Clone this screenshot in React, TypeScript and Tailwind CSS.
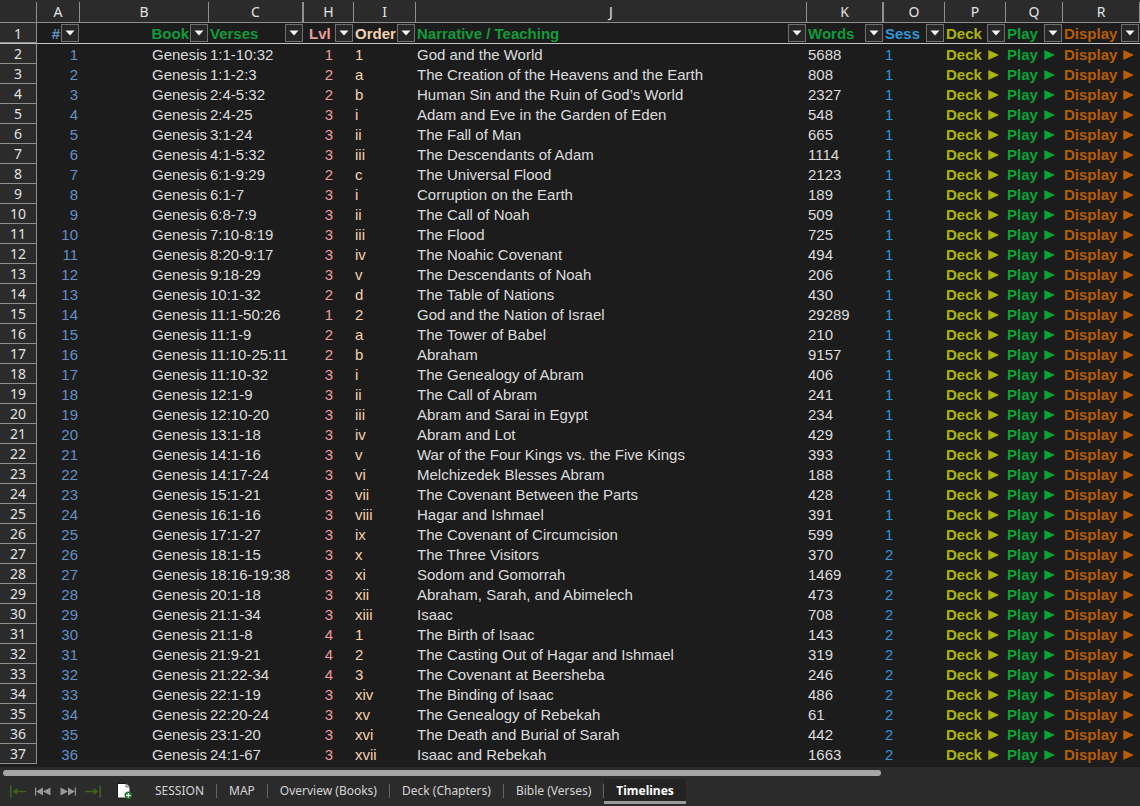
import React from "react";

type Row = [verses: string, level: number, order: string, title: string, words: number];

const rows: Row[] = [
  ["1:1-10:32", 1, "1", "God and the World", 5688],
  ["1:1-2:3", 2, "a", "The Creation of the Heavens and the Earth", 808],
  ["2:4-5:32", 2, "b", "Human Sin and the Ruin of God’s World", 2327],
  ["2:4-25", 3, "i", "Adam and Eve in the Garden of Eden", 548],
  ["3:1-24", 3, "ii", "The Fall of Man", 665],
  ["4:1-5:32", 3, "iii", "The Descendants of Adam", 1114],
  ["6:1-9:29", 2, "c", "The Universal Flood", 2123],
  ["6:1-7", 3, "i", "Corruption on the Earth", 189],
  ["6:8-7:9", 3, "ii", "The Call of Noah", 509],
  ["7:10-8:19", 3, "iii", "The Flood", 725],
  ["8:20-9:17", 3, "iv", "The Noahic Covenant", 494],
  ["9:18-29", 3, "v", "The Descendants of Noah", 206],
  ["10:1-32", 2, "d", "The Table of Nations", 430],
  ["11:1-50:26", 1, "2", "God and the Nation of Israel", 29289],
  ["11:1-9", 2, "a", "The Tower of Babel", 210],
  ["11:10-25:11", 2, "b", "Abraham", 9157],
  ["11:10-32", 3, "i", "The Genealogy of Abram", 406],
  ["12:1-9", 3, "ii", "The Call of Abram", 241],
  ["12:10-20", 3, "iii", "Abram and Sarai in Egypt", 234],
  ["13:1-18", 3, "iv", "Abram and Lot", 429],
  ["14:1-16", 3, "v", "War of the Four Kings vs. the Five Kings", 393],
  ["14:17-24", 3, "vi", "Melchizedek Blesses Abram", 188],
  ["15:1-21", 3, "vii", "The Covenant Between the Parts", 428],
  ["16:1-16", 3, "viii", "Hagar and Ishmael", 391],
  ["17:1-27", 3, "ix", "The Covenant of Circumcision", 599],
  ["18:1-15", 3, "x", "The Three Visitors", 370],
  ["18:16-19:38", 3, "xi", "Sodom and Gomorrah", 1469],
  ["20:1-18", 3, "xii", "Abraham, Sarah, and Abimelech", 473],
  ["21:1-34", 3, "xiii", "Isaac", 708],
  ["21:1-8", 4, "1", "The Birth of Isaac", 143],
  ["21:9-21", 4, "2", "The Casting Out of Hagar and Ishmael", 319],
  ["21:22-34", 4, "3", "The Covenant at Beersheba", 246],
  ["22:1-19", 3, "xiv", "The Binding of Isaac", 486],
  ["22:20-24", 3, "xv", "The Genealogy of Rebekah", 61],
  ["23:1-20", 3, "xvi", "The Death and Burial of Sarah", 442],
  ["24:1-67", 3, "xvii", "Isaac and Rebekah", 1663],
];

// Session 2 starts with row 26
const sessionOf = (n: number) => (n < 26 ? 1 : 2);

const columns = [
  { letter: "A", label: "#", width: "w-[43px]", color: "text-[#6590c6]", align: "justify-end" },
  { letter: "B", label: "Book", width: "w-[129px]", color: "text-[#129b3b]", align: "justify-end" },
  { letter: "C", label: "Verses", width: "w-[95px]", color: "text-[#129b3b]", align: "justify-between", hiddenAfter: true },
  { letter: "H", label: "Lvl", width: "w-[50px]", color: "text-[#eb9d9d]", align: "justify-between", indent: true },
  { letter: "I", label: "Order", width: "w-[62px]", color: "text-[#f3d2ae]", align: "justify-between" },
  { letter: "J", label: "Narrative / Teaching", width: "", color: "text-[#129b3b]", align: "justify-between" },
  { letter: "K", label: "Words", width: "w-[77px]", color: "text-[#129b3b]", align: "justify-between", hiddenAfter: true },
  { letter: "O", label: "Sess", width: "w-[61px]", color: "text-[#3094d8]", align: "justify-between" },
  { letter: "P", label: "Deck", width: "w-[61px]", color: "text-[#acb20c]", align: "justify-between" },
  { letter: "Q", label: "Play", width: "w-[57px]", color: "text-[#0aa136]", align: "justify-between" },
  { letter: "R", label: "Display", width: "w-[77px]", color: "text-[#b85c06]", align: "justify-between" },
];

const tabs = ["SESSION", "MAP", "Overview (Books)", "Deck (Chapters)", "Bible (Verses)", "Timelines"];

const FilterButton = ({ label }: { label: string }) => (
  <button
    type="button"
    aria-label={`Filter ${label}`}
    className="flex size-[18px] shrink-0 items-center justify-center border border-[#707070] bg-[#262626]"
  >
    <svg width="10" height="6" viewBox="0 0 10 6" fill="#f4f4f4">
      <path d="M.5.5h9L5 5.5z" />
    </svg>
  </button>
);

const ActionLink = ({ label }: { label: string }) => (
  <a href={`#${label.toLowerCase()}`} className="font-bold">
    {label}
    <svg width="11" height="10" viewBox="0 0 11 10" fill="currentColor" className="ml-1.5 inline-block align-baseline">
      <path d="M.3 0 11 5 .3 10z" />
    </svg>
  </a>
);

const Sheet = () => (
  <table className="w-full table-fixed border-separate border-spacing-0 whitespace-nowrap">
    <colgroup>
      <col className="w-[37px]" />
      {columns.map((c) => (
        <col key={c.letter} className={c.width} />
      ))}
    </colgroup>
    <thead>
      <tr className="bg-[#2b2b2b] font-['Noto_Sans',sans-serif] text-sm text-[#e2e2e2]">
        <td className="border-b border-[#8e8e8e] p-0 pt-0.5">
          <div className="h-5 border-r border-[#8e8e8e]" />
        </td>
        {columns.map((c) => (
          <th key={c.letter} scope="col" className="border-b border-[#8e8e8e] p-0 pt-0.5 font-normal">
            <div className={`h-5 border-[#8e8e8e] leading-[19px] ${c.hiddenAfter ? "border-r-2" : "border-r"}`}>
              {c.letter}
            </div>
          </th>
        ))}
      </tr>
      <tr>
        <th
          scope="row"
          className="border-r border-b border-r-[#8e8e8e] border-b-[#c4c4c4] bg-[#2b2b2b] p-0 text-center font-['Noto_Sans',sans-serif] text-sm leading-[19px] font-normal text-[#e2e2e2] shadow-[inset_0_-1px_#8e8e8e]"
        >
          1
        </th>
        {columns.map((c) => (
          <th key={c.letter} className={`border-b border-[#c4c4c4] p-0 ${c.color}`}>
            <div className={`flex h-5 items-center gap-px pr-px ${c.align} ${c.indent ? "pl-[5px]" : "pl-px"}`}>
              <span className="pt-0.5 leading-[18px]">{c.label}</span>
              <FilterButton label={c.label} />
            </div>
          </th>
        ))}
      </tr>
    </thead>
    <tbody className="leading-[18px]">
      {rows.map(([verses, level, order, title, words], i) => (
        <tr key={i} className="[&>td]:pt-0.5">
          <th
            scope="row"
            className="border-r border-b border-[#8e8e8e] bg-[#2b2b2b] p-0 text-center font-['Noto_Sans',sans-serif] text-sm leading-[19px] font-normal text-[#e2e2e2]"
          >
            {i + 2}
          </th>
          <td className="p-0 pr-0.5 text-right text-[#6590c6]">{i + 1}</td>
          <td className="p-0 pr-0.5 text-right">Genesis</td>
          <td className="p-0 pl-px">{verses}</td>
          <td className="p-0 text-center text-[#eb9d9d]">{level}</td>
          <td className="p-0 pl-px text-[#f3d2ae]">{order}</td>
          <td className="p-0 pl-px">{title}</td>
          <td className="p-0 pl-px">{words}</td>
          <td className="p-0 pl-px text-[#3094d8]">{sessionOf(i + 1)}</td>
          <td className="p-0 pl-px text-[#acb20c]">
            <ActionLink label="Deck" />
          </td>
          <td className="p-0 pl-px text-[#0aa136]">
            <ActionLink label="Play" />
          </td>
          <td className="p-0 pl-px text-[#b85c06]">
            <ActionLink label="Display" />
          </td>
        </tr>
      ))}
    </tbody>
  </table>
);

const SheetNav = () => (
  <div className="flex items-center gap-[9px]">
    <button type="button" aria-label="First sheet">
      <svg width="16" height="13" viewBox="0 0 16 13" fill="#41601c">
        <path d="M0 .5h1.6v12H0zM2.5 6.5 7.5 3v2.7H16v1.6H7.5V10z" />
      </svg>
    </button>
    <button type="button" aria-label="Previous sheet">
      <svg width="16" height="13" viewBox="0 0 16 13" fill="#999">
        <path d="M0 2.5h1.2v8H0zM1.2 6.5 8 2.5v8zM8 6.5l7.5-4v8z" />
      </svg>
    </button>
    <button type="button" aria-label="Next sheet">
      <svg width="16" height="13" viewBox="0 0 16 13" fill="#999">
        <path d="M14.8 2.5H16v8h-1.2zM14.8 6.5 8 2.5v8zM8 6.5l-7.5-4v8z" />
      </svg>
    </button>
    <button type="button" aria-label="Last sheet">
      <svg width="16" height="13" viewBox="0 0 16 13" fill="#41601c">
        <path d="M14.4.5H16v12h-1.6zM13.5 6.5 8.5 3v2.7H0v1.6h8.5V10z" />
      </svg>
    </button>
  </div>
);

const TabBar = () => (
  <div className="flex h-[30px] items-center pl-2.5 font-['Noto_Sans',sans-serif] text-xs text-[#d4d4d4]">
    <SheetNav />
    <button type="button" aria-label="Add sheet" className="mr-[11px] ml-4">
      <svg width="15" height="16" viewBox="0 0 15 16">
        <path d="M.5.5H9L13 4v11H.5z" fill="#fff" stroke="#1a1a1a" />
        <path d="M9 .5V4h4" fill="#ddd" stroke="#555" strokeWidth=".8" />
        <circle cx="11.3" cy="12.3" r="3.7" fill="#1e7a2f" />
        <path d="M11.3 10v4.6M9 12.3h4.6" stroke="#fff" strokeWidth="1.2" />
      </svg>
    </button>
    <nav className="flex h-full items-center">
      {tabs.map((tab) =>
        tab === "Timelines" ? (
          <button
            key={tab}
            type="button"
            aria-current="page"
            className="h-[25px] border-b-[3px] border-[#999] bg-[#232323] px-3 pt-0.5 font-bold text-white"
          >
            {tab}
          </button>
        ) : (
          <button key={tab} type="button" className="h-3.5 border-r border-[#666] px-3 leading-[14px]">
            {tab}
          </button>
        )
      )}
    </nav>
  </div>
);

export default function App() {
  return (
    <div className="w-full overflow-hidden bg-[#2b2b2b]">
      <main className="bg-[#1c1c1c] pb-[3px] font-['Liberation_Sans',Arial,sans-serif] text-[15px] text-[#dcdcdc]">
        <Sheet />
      </main>
      <div className="px-[3px] pt-[3px]">
        <div className="h-1.5 w-[77.4%] rounded-full bg-[#a6a6a6]" />
      </div>
      <TabBar />
    </div>
  );
}
